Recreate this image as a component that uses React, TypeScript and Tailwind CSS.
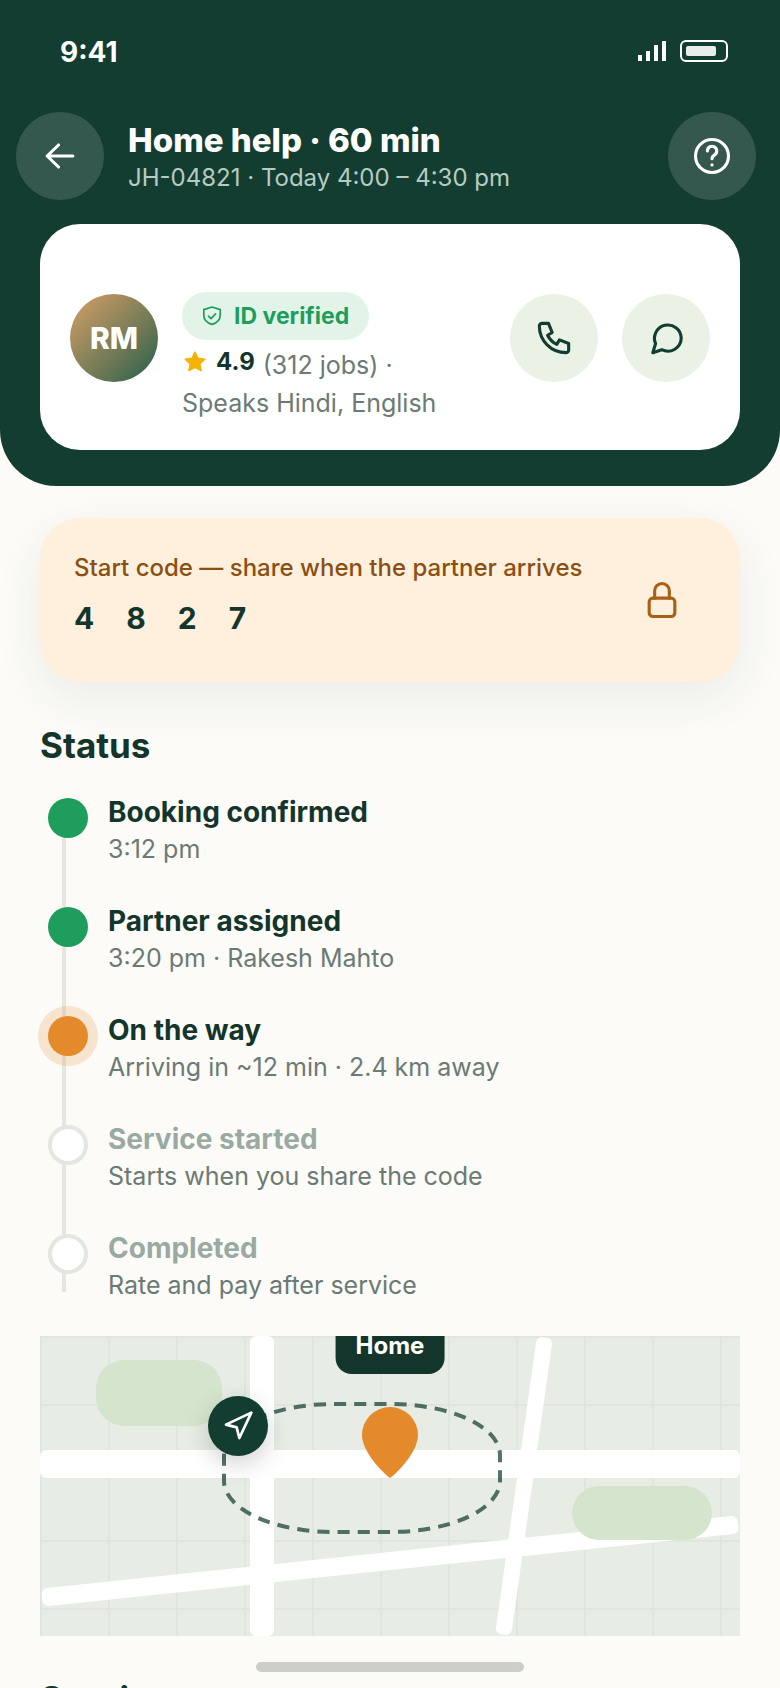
import type { ReactNode } from 'react';
import { Navigation } from 'lucide-react';

type StepState = 'done' | 'active' | 'pending';

const steps: { title: string; detail: string; state: StepState }[] = [
  { title: 'Booking confirmed', detail: '3:12 pm', state: 'done' },
  { title: 'Partner assigned', detail: '3:20 pm · Rakesh Mahto', state: 'done' },
  { title: 'On the way', detail: 'Arriving in ~12 min · 2.4 km away', state: 'active' },
  { title: 'Service started', detail: 'Starts when you share the code', state: 'pending' },
  { title: 'Completed', detail: 'Rate and pay after service', state: 'pending' },
];

const dotStyles: Record<StepState, string> = {
  done: 'bg-[#1f9d5c]',
  active: 'bg-[#e58a2b] ring-[10px] ring-[#e58a2b]/20',
  pending: 'bg-white border-4 border-[#e3e6e1]',
};

const startCode = ['4', '8', '2', '7'];

const Icon = ({ className, children }: { className: string; children: ReactNode }) => (
  <svg
    viewBox="0 0 24 24"
    fill="none"
    stroke="currentColor"
    strokeWidth="1.7"
    strokeLinecap="round"
    strokeLinejoin="round"
    aria-hidden="true"
    className={className}
  >
    {children}
  </svg>
);

const StatusBar = () => (
  <div className="flex h-[104px] items-center justify-between pl-[60px] pr-[52px]">
    <span className="text-[28px] leading-9 font-bold">9:41</span>
    <div className="flex items-center gap-[14px] pb-0.5">
      <svg viewBox="0 0 28 20" fill="currentColor" aria-hidden="true" className="h-5 w-7">
        <rect x="0" y="14" width="4" height="6" />
        <rect x="8" y="10" width="4" height="10" />
        <rect x="16" y="4" width="4" height="16" />
        <rect x="24" y="0" width="4" height="20" />
      </svg>
      <svg viewBox="0 0 48 22" aria-hidden="true" className="h-[22px] w-12">
        <rect x="1" y="1" width="46" height="20" rx="5" fill="none" stroke="currentColor" strokeWidth="2" />
        <rect x="6" y="6" width="30" height="10" rx="2" fill="currentColor" opacity="0.9" />
      </svg>
    </div>
  </div>
);

const PartnerCard = () => (
  <section className="mx-10 mt-6 flex items-center gap-6 rounded-[40px] bg-white px-[30px] pt-[30px] pb-7">
    <div className="flex size-[88px] shrink-0 items-center justify-center rounded-full bg-linear-135 from-[#d9a066] to-[#1b5e4a] text-[30px] font-extrabold">
      RM
    </div>
    <div className="min-w-0 flex-1 pt-[38px]">
      <div className="inline-flex h-12 items-center gap-2.5 rounded-full bg-[#e2f4e8] pr-5 pl-[18px] align-top text-[23px] font-bold text-[#1f9d5c]">
        <Icon className="size-6">
          <path d="M12 3l8.2 2.6v5.8c0 4.4-3.4 7.4-8.2 9-4.8-1.6-8.2-4.6-8.2-9V5.6z" />
          <path d="M8.5 12.2l2.5 2.4 4.6-4.7" />
        </Icon>
        ID verified
      </div>
      <p className="mt-1.5 text-[25px] leading-[38px] text-[#6b7a74]">
        <span className="mr-2 inline-flex items-center gap-2 align-top text-[24px] leading-8 font-bold text-[#14352b]">
          <svg viewBox="0 0 24 24" aria-hidden="true" className="size-[26px]">
            <path
              d="M12 2.9l2.7 5.7 6.3.8-4.6 4.3 1.2 6.2L12 16.9l-5.6 3 1.2-6.2L3 9.400l6.3-.8z"
              fill="#f5b301"
              stroke="#f5b301"
              strokeWidth="1.4"
              strokeLinejoin="round"
            />
          </svg>
          4.9
        </span>
        (312 jobs) · Speaks&nbsp;Hindi, English
      </p>
    </div>
    <button
      type="button"
      aria-label="Call partner"
      className="flex size-[88px] shrink-0 items-center justify-center rounded-full bg-[#eaf1e5] text-[#143d31]"
    >
      <Icon className="size-11">
        <path d="M5.5 4H9l2 5-2.5 1.5a11 11 0 0 0 5 5L15 13l5 2v3.5a1.5 1.5 0 0 1-1.5 1.5A14.5 14.5 0 0 1 4 5.5 1.5 1.5 0 0 1 5.5 4z" />
      </Icon>
    </button>
    <button
      type="button"
      aria-label="Message partner"
      className="flex size-[88px] shrink-0 items-center justify-center rounded-full bg-[#eaf1e5] text-[#143d31]"
    >
      <Icon className="size-11">
        <path d="M20.3 11.9a7.3 7.3 0 0 1-10.6 6.5L4.8 20l1.5-4.9A7.3 7.3 0 1 1 20.3 11.9z" />
      </Icon>
    </button>
  </section>
);

const Timeline = () => (
  <ol className="relative mt-[26px] flex flex-col gap-[35px]">
    <span className="absolute top-4 bottom-3 left-[22px] w-1 bg-[#e3e6e1]" />
    {steps.map((step) => (
      <li key={step.title} className="relative flex gap-5 pl-2">
        <span className={`mt-1 size-10 shrink-0 rounded-full ${dotStyles[step.state]}`} />
        <div>
          <h3 className={`text-[28px] leading-9 font-bold ${step.state === 'pending' ? 'text-[#9aaaa2]' : 'text-[#14352b]'}`}>
            {step.title}
          </h3>
          <p className="text-[25px] leading-[38px] text-[#6b7a74]">{step.detail}</p>
        </div>
      </li>
    ))}
  </ol>
);

const LiveMap = () => (
  <div className="relative mt-8 h-[300px] overflow-hidden bg-[#e7ede5]">
    <svg viewBox="0 0 700 300" preserveAspectRatio="xMidYMid slice" aria-hidden="true" className="size-full">
      <defs>
        <pattern id="blocks" width="68" height="68" patternUnits="userSpaceOnUse">
          <path d="M1 0V68M0 1H68" stroke="#143d31" strokeOpacity="0.04" strokeWidth="2" />
        </pattern>
      </defs>
      <rect width="700" height="300" fill="url(#blocks)" />
      {/* roads */}
      <g fill="#fff">
        <rect x="0" y="114" width="700" height="28" rx="6" />
        <rect x="210" y="0" width="24" height="300" rx="6" />
        <rect x="0" y="216" width="700" height="18" rx="6" transform="rotate(-6 350 225)" />
        <rect x="476" y="0" width="16" height="300" rx="6" transform="rotate(8 484 150)" />
      </g>
      {/* parks */}
      <g fill="#d5e5cd">
        <rect x="56" y="24" width="126" height="66" rx="28" />
        <rect x="532" y="150" width="140" height="54" rx="27" />
      </g>
      {/* route */}
      <rect
        x="184"
        y="68"
        width="276"
        height="128"
        rx="110"
        ry="51"
        fill="none"
        stroke="#143d31"
        strokeOpacity="0.72"
        strokeWidth="4"
        pathLength="340"
        strokeDasharray="6 4"
      />
      <path d="M350 142C343 137 322 116 322 99a28 28 0 0 1 56 0C378 116 357 137 350 142z" fill="#e58a2b" />
    </svg>
    <span className="absolute top-[-18px] left-1/2 -translate-x-1/2 rounded-2xl bg-[#14352b] px-5 py-3 text-[24px] leading-8 font-bold text-white">
      Home
    </span>
    <span className="absolute top-[20%] left-[24%] flex size-[60px] items-center justify-center rounded-full bg-[#143d31] text-white shadow-[0_8px_24px_rgba(0,0,0,0.18)]">
      <Navigation className="size-8" />
    </span>
  </div>
);

const App = () => {
  return (
    <div className="relative h-screen overflow-hidden bg-[#fcfbf7] font-['Inter',sans-serif] text-[#14352b]">
      <div className="h-full overflow-y-auto [scrollbar-width:none]">
        <header className="rounded-b-[56px] bg-[#143d31] pb-9 text-white">
          <StatusBar />
          <div className="mt-2 flex items-center gap-6 pr-6 pl-4">
            <button
              type="button"
              aria-label="Back"
              className="flex size-[88px] shrink-0 items-center justify-center rounded-full bg-white/14"
            >
              <Icon className="size-11">
                <path d="M19 12H5M11.2 6L5 12l6.2 6" />
              </Icon>
            </button>
            <div className="flex-1 pt-0.5">
              <h1 className="text-[33px] leading-10 font-extrabold">Home help · 60 min</h1>
              <p className="mt-0.5 text-[24px] leading-8 text-[#b6cbc1]">JH-04821 · Today 4:00 – 4:30 pm</p>
            </div>
            <button
              type="button"
              aria-label="Help"
              className="flex size-[88px] shrink-0 items-center justify-center rounded-full bg-white/14"
            >
              <Icon className="size-11">
                <circle cx="12" cy="12" r="9" />
                <path d="M9.5 9.3a2.55 2.55 0 1 1 3.9 2.1c-.9.6-1.4 1-1.4 2.1M12 16.8v.1" />
              </Icon>
            </button>
          </div>
          <PartnerCard />
        </header>

        <main className="px-10 pb-24">
          <section className="mt-8 flex items-center justify-between rounded-[40px] bg-[#ffefdd] pr-14 pl-[34px] shadow-[0_16px_48px_rgba(20,63,50,0.08)]">
            <div className="pt-8 pb-11">
              <p className="text-[24px] leading-9 font-medium text-[#8a4f12]">Start code — share when the partner arrives</p>
              <p className="mt-3 flex gap-8 text-[30px] leading-10 font-bold">
                {startCode.map((digit) => (
                  <span key={digit}>{digit}</span>
                ))}
              </p>
            </div>
            <Icon className="size-11 text-[#a86015]">
              <rect x="5" y="11" width="14" height="10" rx="2" />
              <path d="M8 11V7a4 4 0 0 1 8 0v4" />
            </Icon>
          </section>

          <h2 className="mt-10 text-[35px] leading-[46px] font-bold">Status</h2>
          <Timeline />
          <LiveMap />
          <h2 className="mt-10 text-[35px] leading-[46px] font-bold">Service</h2>
        </main>
      </div>
      <div className="absolute bottom-4 left-1/2 h-2.5 w-[268px] -translate-x-1/2 rounded-full bg-[#cdcec8]" />
    </div>
  );
};

export default App;
